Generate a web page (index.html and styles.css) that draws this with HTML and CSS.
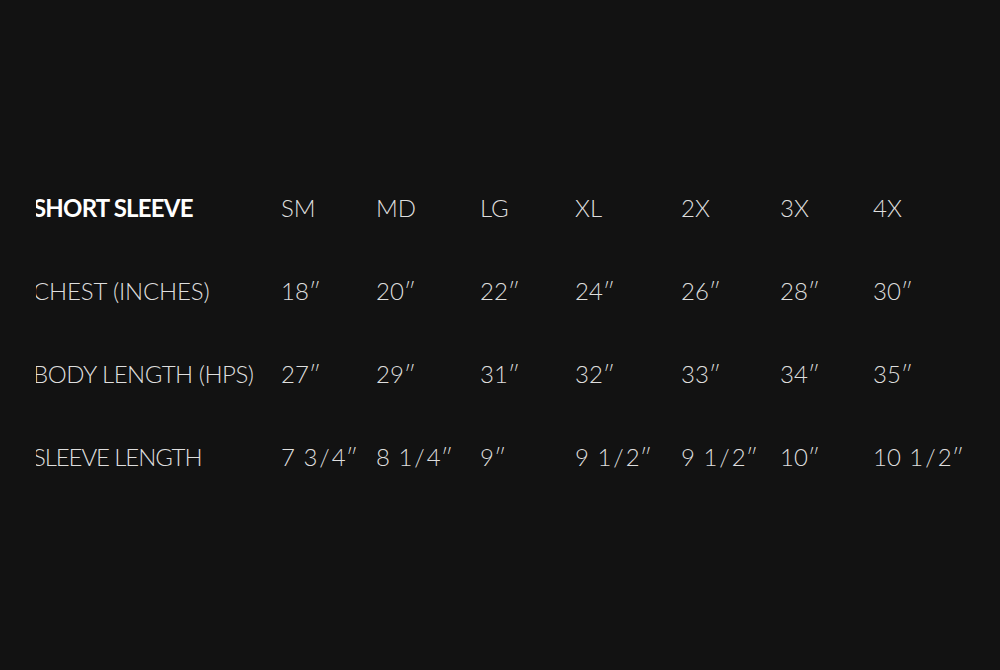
FILE: index.html
```html
<!DOCTYPE html>
<html lang="en">
<head>
<meta charset="utf-8">
<title>Size Chart</title>
<link rel="stylesheet" href="styles.css">
</head>
<body>
<div class="frame">
  <div class="chart">
    <div class="row head">
      <div class="label">SHORT SLEEVE</div>
      <div>SM</div><div>MD</div><div>LG</div><div>XL</div><div>2X</div><div>3X</div><div>4X</div>
    </div>
    <div class="row">
      <div class="label">CHEST (INCHES)</div>
      <div>18″</div><div>20″</div><div>22″</div><div>24″</div><div>26″</div><div>28″</div><div>30″</div>
    </div>
    <div class="row">
      <div class="label body-len">BODY LENGTH (HPS)</div>
      <div>27″</div><div>29″</div><div>31″</div><div>32″</div><div>33″</div><div>34″</div><div>35″</div>
    </div>
    <div class="row">
      <div class="label sleeve-len">SLEEVE LENGTH</div>
      <div>7 3<span class="sl">/</span>4″</div><div>8 1<span class="sl">/</span>4″</div><div>9″</div><div>9 1<span class="sl">/</span>2″</div><div>9 1<span class="sl">/</span>2″</div><div>10″</div><div>10 1<span class="sl">/</span>2″</div>
    </div>
  </div>
</div>
</body>
</html>
```
FILE: styles.css
```css
html, body {
  margin: 0;
  padding: 0;
  background: #121212;
}
body {
  width: 1000px;
  height: 670px;
  overflow: hidden;
  font-family: "Lato", "DejaVu Sans", sans-serif;
}
.frame {
  margin-left: 36px;
  width: 928px;
  overflow: hidden;
  padding-top: 193px;
}
.chart {
  margin-left: -3px;
  display: flex;
  flex-direction: column;
  gap: 54px;
}
.row {
  display: grid;
  grid-template-columns: 248px 95px 104px 95px 106px 99px 93px 120px;
  font-size: 24px;
  line-height: 29px;
  font-weight: 300;
  color: #dedede;
  white-space: nowrap;
  word-spacing: 2px;
}
.label {
  word-spacing: 0;
  letter-spacing: -0.15px;
}
.body-len {
  letter-spacing: -0.5px;
}
.sleeve-len {
  letter-spacing: -1.1px;
}
.row.head .label {
  font-weight: 700;
  color: #ffffff;
  letter-spacing: -0.8px;
}
.sl {
  margin: 0 2px;
}
```
